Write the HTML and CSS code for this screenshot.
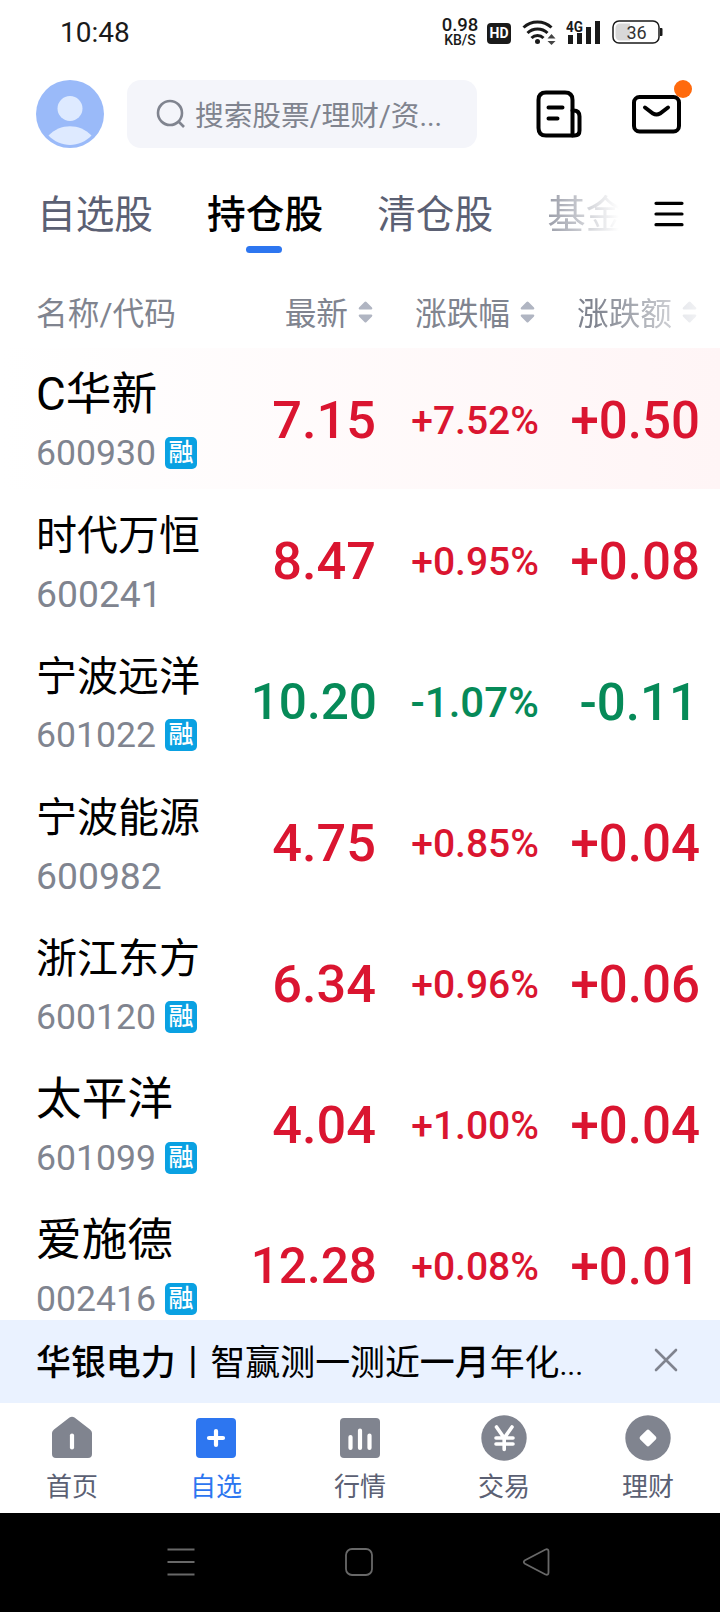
FILE: index.html
```html
<!DOCTYPE html>
<html lang="zh-CN">
<head>
    <meta charset="UTF-8">
    <meta name="viewport" content="width=device-width, initial-scale=1.0">
    <title>自选 - 持仓股</title>
    <link rel="stylesheet" href="styles.css">
</head>
<body>

    <div class="status-bar">
        <span class="time">10:48</span>
        <div class="status-icons">
            <div class="speed"><span>0.98</span><small>KB/S</small></div>
            <span class="hd">HD</span>
            <svg class="wifi" width="34" height="26" viewBox="0 0 34 26">
                <g fill="none" stroke="#1a1a1a" stroke-width="3">
                    <path d="M1.5 8.5a20.500 20.500 0 0 1 28 0"/>
                    <path d="M5.500 14a14.500 14.500 0 0 1 20 0"/>
                    <path d="M9.500 19a8.500 8.500 0 0 1 12 0"/>
                </g>
                <circle cx="15.500" cy="22.500" r="2.500" fill="#1a1a1a"/>
                <path d="M29.500 15l4 4.500h-8zM29.500 26l4-4h-8z" fill="#444"/>
            </svg>
            <svg class="signal" width="36" height="26" viewBox="0 0 36 26">
                <text x="0" y="12.500" font-size="15" font-weight="700" textLength="17" lengthAdjust="spacingAndGlyphs">4G</text>
                <path d="M2 16h5v9H2zM11 14h5v11h-5zM20 8h5v17h-5zM29 2h5v23h-5z"/>
            </svg>
            <svg class="battery" width="52" height="26" viewBox="0 0 52 26">
                <rect x="1" y="2" width="46" height="22" rx="6" fill="none" stroke="#1a1a1a" stroke-width="1.500"/>
                <path d="M8 4.500h10v17H8a4.500 4.500 0 0 1-4.500-4.500V9A4.500 4.500 0 0 1 8 4.500z" fill="#d8d8d8"/>
                <path d="M48 9h1.500q1 0 1 1v6q0 1-1 1H48z" fill="#1a1a1a"/>
                <text x="14.500" y="20" font-size="18" fill="#333">36</text>
            </svg>
        </div>
    </div>

    <header>
        <svg class="avatar" width="68" height="68" viewBox="0 0 68 68">
            <circle cx="34" cy="34" r="34" fill="#9abaf9"/>
            <circle cx="34" cy="28.500" r="12.500" fill="#deeaff"/>
            <path d="M12.500 55.500C24 43 44 43 55.500 55.500C44 68 24 68 12.500 55.500z" fill="#deeaff"/>
        </svg>
        <div class="search">
            <svg width="30" height="30" viewBox="0 0 30 30" fill="none" stroke="#80848f" stroke-width="2.600">
                <circle cx="14" cy="14" r="12"/>
                <path d="M22.500 22.500l5.500 5.500"/>
            </svg>
            <span>搜索股票/理财/资...</span>
        </div>
        <svg class="news" width="46" height="48" viewBox="0 0 46 48" fill="none" stroke="#000" stroke-width="4" stroke-linecap="round">
            <path d="M36.500 45.500H10q-7.500 0-7.500-7.500V10q0-7.500 7.500-7.500h19q7.500 0 7.500 7.500z" stroke-linejoin="round"/>
            <path d="M36.500 20.500h1q6 0 6 6v14q0 5-5 5h-2M12.500 17.500h14M12.500 28.500h9"/>
        </svg>
        <div class="mail">
            <svg width="50" height="40" viewBox="0 0 50 40" fill="none" stroke="#000" stroke-width="4" stroke-linecap="round">
                <rect x="3" y="3" width="45" height="34.500" rx="5.500"/>
                <path d="M14 13.500l8 6q3.500 2 7 0l8-6"/>
            </svg>
            <i class="dot"></i>
        </div>
    </header>

    <nav class="tabs">
        <div class="tab-list">
            <a>自选股</a>
            <a class="active">持仓股</a>
            <a>清仓股</a>
            <a class="fade">基金</a>
        </div>
        <svg width="30" height="26" viewBox="0 0 30 26" stroke="#000" stroke-width="3.200" stroke-linecap="round">
            <path d="M2 2.300h26M2 13h26M2 23.700h26"/>
        </svg>
    </nav>

    <main>
        <div class="grid head">
            <span class="name">名称/代码</span>
            <span>最新<svg class="sort" viewBox="0 0 15 22"><use href="#sort"/></svg></span>
            <span>涨跌幅<svg class="sort" viewBox="0 0 15 22"><use href="#sort"/></svg></span>
            <span class="fade-col">涨跌额<svg class="sort" viewBox="0 0 15 22"><use href="#sort"/></svg></span>
        </div>

        <div class="stocks">
            <div class="grid row hot">
                <div class="stock"><b class="big">C华新</b><p>600930<i>融</i></p></div>
                <span class="num price">7.15</span><span class="pct">+7.52%</span><span class="num">+0.50</span>
            </div>
            <div class="grid row">
                <div class="stock"><b>时代万恒</b><p class="plain">600241</p></div>
                <span class="num price">8.47</span><span class="pct">+0.95%</span><span class="num">+0.08</span>
            </div>
            <div class="grid row down">
                <div class="stock"><b>宁波远洋</b><p>601022<i>融</i></p></div>
                <span class="num price long">10.20</span><span class="pct">-1.07%</span><span class="num">-0.11</span>
            </div>
            <div class="grid row">
                <div class="stock"><b>宁波能源</b><p class="plain">600982</p></div>
                <span class="num price">4.75</span><span class="pct">+0.85%</span><span class="num">+0.04</span>
            </div>
            <div class="grid row">
                <div class="stock"><b>浙江东方</b><p>600120<i>融</i></p></div>
                <span class="num price">6.34</span><span class="pct">+0.96%</span><span class="num">+0.06</span>
            </div>
            <div class="grid row">
                <div class="stock"><b class="big">太平洋</b><p>601099<i>融</i></p></div>
                <span class="num price">4.04</span><span class="pct">+1.00%</span><span class="num">+0.04</span>
            </div>
            <div class="grid row">
                <div class="stock"><b class="big">爱施德</b><p>002416<i>融</i></p></div>
                <span class="num price long">12.28</span><span class="pct">+0.08%</span><span class="num">+0.01</span>
            </div>
        </div>
    </main>

    <div class="notice">
        <p><strong>华银电力</strong>丨智赢测一测近<strong>一月</strong>年化<span class="dots">...</span></p>
        <svg width="24" height="24" viewBox="0 0 24 24" stroke="#80848f" stroke-width="2.600" stroke-linecap="round">
            <path d="M2 2l20 20M22 2L2 22"/>
        </svg>
    </div>

    <footer class="tabbar">
        <a>
            <svg viewBox="0 0 46 46"><path d="M3 18q0-2 2-3.500L20.500 2.500q2.500-1.700 5 0L41 14.500q2 1.500 2 3.500v21q0 4-4 4H7q-4 0-4-4z" fill="#80848f"/><path d="M23 20.500v12" class="line"/></svg>
            <span>首页</span>
        </a>
        <a class="active">
            <svg viewBox="0 0 46 46"><rect x="3" y="3" width="40" height="40" rx="4" fill="#2d76f0"/><path d="M23 16v14M16 23h14" class="line"/></svg>
            <span>自选</span>
        </a>
        <a>
            <svg viewBox="0 0 46 46"><rect x="3" y="3" width="40" height="40" rx="4" fill="#80848f"/><path d="M13.500 22v11M23 15.500v17.500M32.500 20.500v12.500" class="line"/></svg>
            <span>行情</span>
        </a>
        <a>
            <svg viewBox="0 0 46 46"><circle cx="23" cy="23" r="22.700" fill="#80848f"/><path d="M15.500 12l7.700 11L31 12M23.200 23v11.500M15 23h17M15 29h17" class="line thin"/></svg>
            <span>交易</span>
        </a>
        <a>
            <svg viewBox="0 0 46 46"><circle cx="23" cy="23" r="22.700" fill="#80848f"/><rect x="16.500" y="16.500" width="13" height="13" rx="2" transform="rotate(45 23 23)" fill="#fff"/></svg>
            <span>理财</span>
        </a>
    </footer>

    <div class="system-nav">
        <svg width="28" height="28" viewBox="0 0 28 28"><path d="M.5 1.500h27M.5 14h27M.5 26.500h27"/></svg>
        <svg width="28" height="28" viewBox="0 0 28 28"><rect x="1" y="1" width="26" height="26" rx="6"/></svg>
        <svg width="28" height="28" viewBox="0 0 28 28"><path d="M3 12.200L23.500 1.500q3-1 3 2v21q0 3-3 2L3 15.800q-2.500-1.800 0-3.600z"/></svg>
    </div>

    <svg class="defs" width="0" height="0">
        <symbol id="sort" viewBox="0 0 15 22">
            <path d="M6.500 1q1-1 2 0l5.500 5.500q1 1.500-.5 2h-12Q0 8 1 6.500zM6.500 21q1 1 2 0l5.500-5.500q1-1.500-.5-2h-12Q0 14 1 15.500z" fill="#b0b5c2"/>
        </symbol>
    </svg>

</body>
</html>
```

FILE: styles.css
```css
* {
    box-sizing: border-box;
}
body {
    margin: 0;
    width: 720px;
    height: 1612px;
    overflow: hidden;
    display: flex;
    flex-direction: column;
    background-color: #fff;
    font-family: Roboto, "Noto Sans CJK SC", sans-serif;
    color: #000;
}
svg {
    display: block;
    flex: none;
}
p {
    margin: 0;
}
i {
    font-style: normal;
}
.defs {
    position: absolute;
}

/* status bar */
.status-bar {
    height: 66px;
    padding: 0 56px 2px 60px;
    display: flex;
    align-items: center;
    justify-content: space-between;
    color: #1a1a1a;
}
.time {
    font-size: 28px;
}
.status-icons {
    display: flex;
    align-items: center;
}
.speed {
    width: 38px;
    margin-right: 8px;
    padding-top: 2px;
    display: flex;
    flex-direction: column;
    align-items: center;
    font-size: 18.500px;
    line-height: 15px;
    font-weight: 500;
}
.speed small {
    font-size: 14px;
    line-height: 15px;
}
.hd {
    width: 24px;
    height: 21px;
    margin-right: 11px;
    margin-top: 2px;
    border-radius: 4px;
    background-color: #1a1a1a;
    color: #fff;
    font-size: 14px;
    line-height: 21px;
    font-weight: 700;
    text-align: center;
}
.wifi {
    margin-right: 10px;
}
.signal {
    margin-right: 10px;
    fill: #1a1a1a;
}

/* top bar */
header {
    height: 96px;
    padding: 14px 36px 14px;
    display: flex;
    align-items: center;
}
.search {
    width: 350px;
    height: 68px;
    margin-left: 23px;
    padding-left: 29px;
    display: flex;
    align-items: center;
    gap: 9px;
    border-radius: 14px;
    background-color: #f4f5fa;
    color: #80848f;
    font-size: 28.7px;
    white-space: nowrap;
}
.search span {
    padding-bottom: 2px;
}
.news {
    margin-left: 59px;
}
.mail {
    position: relative;
    margin-left: 49px;
}
.dot {
    position: absolute;
    top: -14px;
    right: -11px;
    width: 18px;
    height: 18px;
    border-radius: 50%;
    background-color: #ff6a0d;
}

/* tabs */
.tabs {
    height: 110px;
    padding: 0 0 6px 37px;
    display: flex;
    align-items: center;
}
.tab-list {
    width: 583px;
    margin-right: 34px;
    padding-top: 2px;
    display: flex;
    gap: 54px;
    overflow: hidden;
    font-size: 38.700px;
    line-height: 76px;
    white-space: nowrap;
    color: #5b6073;
}
.tab-list .active {
    position: relative;
    color: #000;
    font-weight: 500;
}
.tab-list .active::after {
    content: "";
    position: absolute;
    left: 39px;
    bottom: 0;
    width: 36px;
    height: 7px;
    border-radius: 4px;
    background-color: #2d76f0;
}
.tab-list .fade {
    background: linear-gradient(90deg, #9a9da8, #fff 72px);
    -webkit-background-clip: text;
    background-clip: text;
    color: transparent;
}

/* stock table */
main {
    height: 1048px;
    overflow: hidden;
}
.grid {
    display: grid;
    grid-template-columns: 200px 141px 162px 162px;
    padding-left: 36px;
    align-items: center;
}
.head {
    height: 76px;
    padding-top: 2px;
    font-size: 31.7px;
    color: #80848f;
}
.head span {
    display: flex;
    align-items: center;
    justify-content: flex-end;
    white-space: nowrap;
    padding-right: 4px;
}
.head .name {
    justify-content: flex-start;
}
.sort {
    width: 15px;
    height: 22px;
    margin: 1px 0 0 10px;
}
.fade-col {
    -webkit-mask-image: linear-gradient(90deg, #000 35%, rgba(0, 0, 0, 0.15));
    mask-image: linear-gradient(90deg, #000 35%, rgba(0, 0, 0, 0.15));
}
.row {
    height: 141px;
    color: #da1530;
}
.hot {
    background: linear-gradient(90deg, #fff, #fff5f6);
}
.down {
    color: #068a58;
}
.num, .pct {
    text-align: right;
    font-weight: 500;
    white-space: nowrap;
}
.num {
    font-size: 51px;
    padding: 4px 1px 0 0;
}
.price {
    font-size: 52.3px;
    padding-top: 2px;
}
.long {
    font-size: 49.500px;
    padding: 3px 0 0;
}
.pct {
    font-size: 39px;
    padding-top: 4px;
}
.down .pct {
    font-size: 42px;
}
.down .num:last-child {
    padding-right: 3px;
}
.stock {
    padding-top: 7px;
}
.stock b {
    display: block;
    height: 62px;
    font-size: 41px;
    line-height: 62px;
    font-weight: 400;
    color: #000;
    white-space: nowrap;
}
.stock .big {
    font-size: 45.700px;
}
.stock p {
    display: flex;
    align-items: center;
    gap: 9px;
    height: 54px;
    font-size: 35.600px;
    color: #80848f;
}
.stock .plain {
    font-size: 37.300px;
}
.stock i {
    width: 32px;
    height: 32px;
    border-radius: 5px;
    background-color: #0aa1e2;
    color: #fff;
    font-size: 25px;
    line-height: 32px;
    font-weight: 500;
    text-align: center;
}

/* notice strip */
.notice {
    height: 83px;
    padding: 0 42px 3px 36px;
    display: flex;
    align-items: center;
    justify-content: space-between;
    background-color: #eaf2ff;
    font-size: 34.900px;
    white-space: nowrap;
}
.notice p {
    padding-bottom: 1px;
}
.notice strong {
    font-weight: 500;
}
.notice .dots {
    font-size: 30px;
}

/* bottom tabs */
.tabbar {
    height: 110px;
    padding-top: 12px;
    display: flex;
}
.tabbar a {
    flex: 1;
    display: flex;
    flex-direction: column;
    align-items: center;
    font-size: 26px;
    line-height: 52px;
    color: #5b6073;
}
.tabbar svg {
    width: 46px;
    height: 46px;
}
.tabbar .active {
    color: #2d76f0;
}
.line {
    fill: none;
    stroke: #fff;
    stroke-width: 4.2;
    stroke-linecap: round;
}
.thin {
    stroke-width: 3.6;
}

.system-nav {
    height: 99px;
    padding: 0 170px 1px 167px;
    display: flex;
    align-items: center;
    justify-content: space-between;
    background-color: #000;
}
.system-nav svg {
    fill: none;
    stroke: #686868;
    stroke-width: 1.800;
}
```
